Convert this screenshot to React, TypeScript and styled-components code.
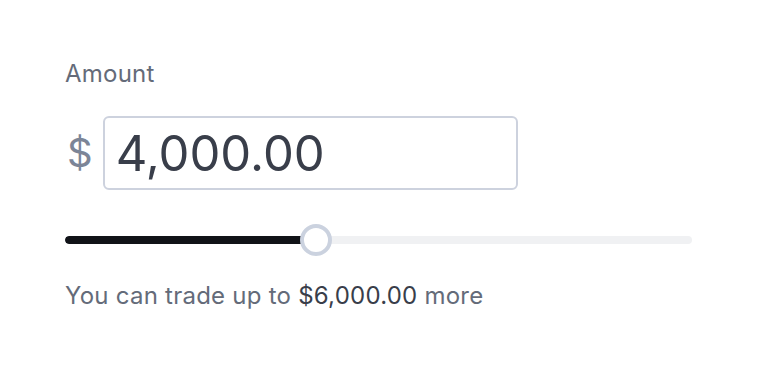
import styled, { createGlobalStyle } from "styled-components";

const GlobalStyle = createGlobalStyle`
  html, body {
    margin: 0;
    padding: 0;
    background: #ffffff;
    font-family: Inter, "Noto Sans", sans-serif;
  }
`;

const Panel = styled.div`
  display: flex;
  flex-direction: column;
  width: 627px;
  padding: 58px 0 0 65px;
`;

const Label = styled.label`
  font-size: 24px;
  line-height: 32px;
  letter-spacing: 0.01em;
  color: #646b79;
  margin-bottom: 26px;
`;

const AmountRow = styled.div`
  display: flex;
  align-items: center;
  gap: 10px;
`;

const Currency = styled.span`
  font-size: 40px;
  line-height: 48px;
  color: #7c8597;
  padding-left: 2px;
`;

const AmountInput = styled.input`
  box-sizing: border-box;
  width: 415px;
  height: 74px;
  padding: 0 11px;
  border: 2px solid #cdd2de;
  border-radius: 6px;
  font-family: inherit;
  font-size: 49px;
  color: #393e4a;
  outline: none;
`;

const SliderWrap = styled.div`
  position: relative;
  height: 32px;
  margin-top: 34px;
  display: flex;
  align-items: center;
`;

const Track = styled.div`
  width: 100%;
  height: 8px;
  border-radius: 4px;
  background: #f0f1f3;
  overflow: hidden;
`;

const Fill = styled.div`
  height: 100%;
  background: #111318;
  border-radius: 4px;
`;

const Thumb = styled.div`
  position: absolute;
  top: 0;
  box-sizing: border-box;
  width: 32px;
  height: 32px;
  margin-left: -16px;
  border-radius: 50%;
  border: 4px solid #cbd2df;
  background: #ffffff;
`;

const Hint = styled.p`
  margin: 24px 0 0;
  font-size: 24px;
  line-height: 32px;
  letter-spacing: 0.01em;
  color: #646b79;
`;

const Strong = styled.span`
  color: #393e4a;
`;

const value = 4000;
const max = 10000;

export default function App() {
  const pct = (value / max) * 100;
  return (
    <>
      <GlobalStyle />
      <Panel>
        <Label htmlFor="amount">Amount</Label>
        <AmountRow>
          <Currency>$</Currency>
          <AmountInput id="amount" defaultValue="4,000.00" />
        </AmountRow>
        <SliderWrap>
          <Track>
            <Fill style={{ width: `${pct}%` }} />
          </Track>
          <Thumb style={{ left: `${pct}%` }} />
        </SliderWrap>
        <Hint>
          You can trade up to <Strong>$6,000.00</Strong> more
        </Hint>
      </Panel>
    </>
  );
}
